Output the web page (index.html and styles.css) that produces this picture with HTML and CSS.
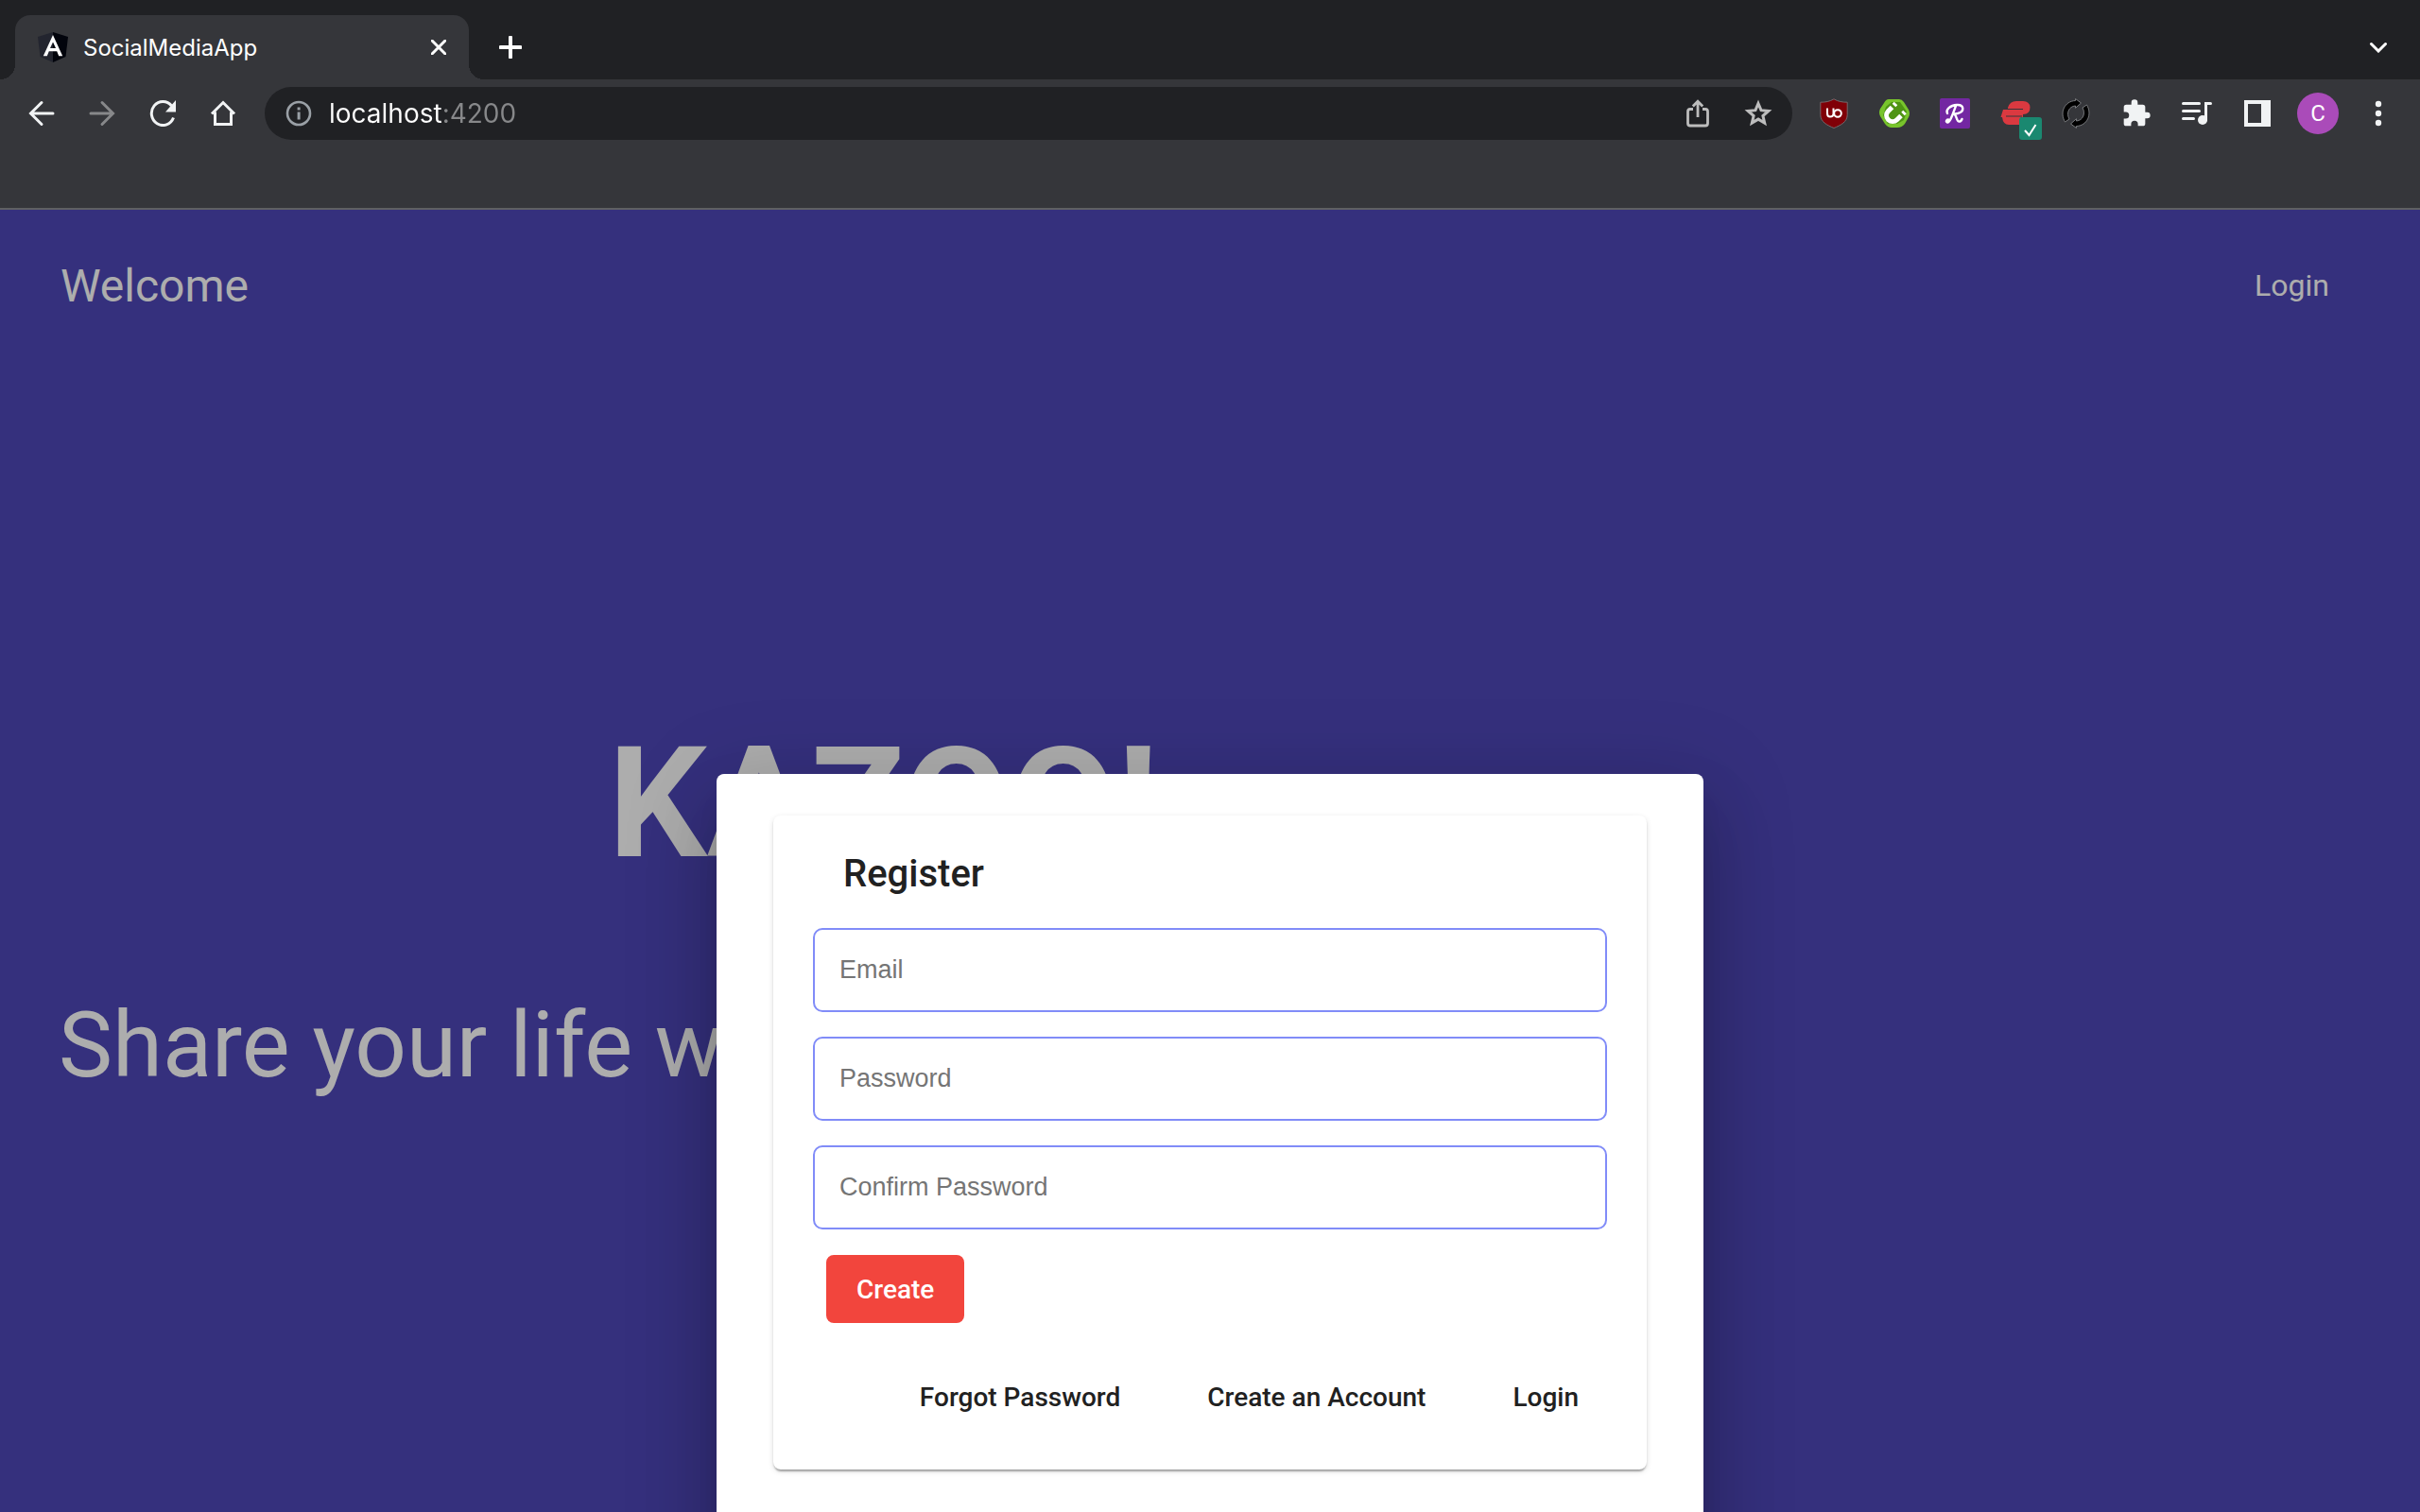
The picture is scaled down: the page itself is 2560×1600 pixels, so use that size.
FILE: index.html
```html
<!DOCTYPE html>
<html lang="en">
<head>
<meta charset="utf-8">
<title>SocialMediaApp</title>
<link rel="stylesheet" href="styles.css">
</head>
<body>
<header class="browser">
  <div class="tabstrip">
    <div class="tab">
      <svg class="favicon" viewBox="0 0 32 32" width="32" height="32"><path fill="#23252f" d="M16 0 0 5l2.500 21L16 32z"/><path fill="#02040c" d="M16 0l16 5-2.500 21L16 32z"/><path fill="#fff" fill-rule="evenodd" d="M16 3 5.800 25.200h4l2-5h8.400l2 5h4zm0 7.600 3 6.400h-6z"/></svg>
      <span class="tab-title">SocialMediaApp</span>
      <button class="tab-close" aria-label="Close tab"><svg viewBox="0 0 16 16" width="16" height="16"><path d="M1 1l14 14M15 1 1 15" stroke="#fff" stroke-width="3" stroke-linecap="round"/></svg></button>
    </div>
    <button class="icon-btn new-tab" aria-label="New tab"><svg viewBox="0 0 24 24" width="24" height="24"><path d="M12 1.500v21M1.500 12h21" stroke="#fff" stroke-width="4" stroke-linecap="round"/></svg></button>
    <button class="icon-btn tab-search" aria-label="Search tabs"><svg viewBox="0 0 20 12" width="20" height="12"><path d="M2.500 2.500 10 10l7.500-7.500" fill="none" stroke="#fff" stroke-width="3" stroke-linecap="round"/></svg></button>
  </div>
  <div class="toolbar">
    <button class="icon-btn" aria-label="Back"><svg viewBox="0 0 28 28" width="28" height="28"><path d="M26 14H3M14 2.500 2.500 14 14 25.500" fill="none" stroke="#f1f3f4" stroke-width="3" stroke-linecap="round"/></svg></button>
    <button class="icon-btn" aria-label="Forward"><svg viewBox="0 0 28 28" width="28" height="28"><path d="M2 14h23M14 2.500 25.500 14 14 25.500" fill="none" stroke="#87888a" stroke-width="3" stroke-linecap="round"/></svg></button>
    <button class="icon-btn" aria-label="Reload"><svg viewBox="0 0 28 28" width="28" height="28"><path d="M25.500 18.500A12 12.500 0 1 1 23.500 6" fill="none" stroke="#f1f3f4" stroke-width="3"/><path fill="#f1f3f4" d="M28 0v12.500H17z"/></svg></button>
    <button class="icon-btn" aria-label="Home"><svg viewBox="0 0 28 28" width="28" height="28"><path d="M2 14.500 14 2.500l12 12M5.500 12.500v13h17v-13" fill="none" stroke="#f1f3f4" stroke-width="3"/></svg></button>
    <div class="omnibox">
      <svg viewBox="0 0 28 28" width="28" height="28"><circle cx="14" cy="14" r="12" fill="none" stroke="#9aa0a6" stroke-width="2.600"/><path fill="#9aa0a6" d="M12.600 12.600h3v8h-3zM12.600 7.400h3v3h-3z"/></svg>
      <input class="address" type="text" value="localhost:4200" aria-label="Address">
      <button class="icon-btn" aria-label="Share this page"><svg viewBox="0 0 28 32" width="28" height="32"><path d="M9 11.500H6a2.500 2.500 0 0 0-2.500 2.500v12.500A2.500 2.500 0 0 0 6 29h16a2.500 2.500 0 0 0 2.500-2.500V14a2.500 2.500 0 0 0-2.500-2.500h-3M14 20V4M8.800 8.500 14 3.300l5.200 5.200" fill="none" stroke="#bdbdbd" stroke-width="2.800"/></svg></button>
      <button class="icon-btn" aria-label="Bookmark this page"><svg viewBox="0 0 32 32" width="32" height="32"><path d="M16 5.500l3 7.200 7.800.7-5.900 5.100 1.800 7.600-6.700-4-6.700 4 1.800-7.600-5.900-5.100 7.800-.7z" fill="none" stroke="#bdbdbd" stroke-width="3"/></svg></button>
    </div>
    <nav class="extensions" aria-label="Extensions">
      <button class="icon-btn" aria-label="uBlock Origin"><svg viewBox="0 0 32 32" width="32" height="32"><path d="M16 .8C11.500 3.500 7 4.200 1.800 4.200v13.300c0 7.500 7 11 14.200 14 7.200-3 14.200-6.500 14.200-14V4.200C25 4.200 20.500 3.500 16 .8z" fill="#800007" stroke="#74696c" stroke-width="1"/><path d="M9 10.500V16q0 3.500 3 3.500 3.500 0 3.500-3.500v-5.500" fill="none" stroke="#fff" stroke-width="2"/><circle cx="20" cy="16" r="3.800" fill="none" stroke="#fff" stroke-width="2"/></svg></button>
      <button class="icon-btn" aria-label="Magnet"><svg viewBox="0 0 32 32" width="32" height="32"><path d="M10 1h11q3 0 5 3l5 8q2 4 0 8l-4 7q-3 4-8 4h-6q-4 0-7-4l-5-8q-2-4 0-8l4-6q2-4 5-4z" fill="#78c42c"/><path d="M13 4h9l7 10-3 9-7 4H9l-5-9 3-9z" fill="#4f9414"/><path d="M13.500 9.500 9.500 13.500a6.500 6.500 0 0 0 9.200 9.200l4.300-4.200" fill="none" stroke="#fff" stroke-width="5"/><path d="M15.500 7.500l2-2M25 16.500l2-2" stroke="#fff" stroke-width="5"/></svg></button>
      <button class="icon-btn" aria-label="Rakuten"><svg viewBox="0 0 32 32" width="32" height="32"><rect width="32" height="32" rx="2" fill="#7327a2"/><path d="M17 8C14 16 11 26 8 25.500c-2-.5-1-3 1-3M8 16C6 12 11 7.500 18 7c8-.5 8.500 7 1 9l-4 .6c3 1 2.500 8 5.500 8 1.500 0 2.500-1.200 3-2.600" fill="none" stroke="#fff" stroke-width="2.400" stroke-linecap="round" stroke-linejoin="round"/></svg></button>
      <button class="icon-btn vpn" aria-label="ExpressVPN connected"><svg viewBox="0 0 32 32" width="32" height="32"><path fill="#da3940" d="M8 10q2-7 9-7h7q7 0 7.500 6.500Q31.500 17 24 17v3H0.500L3 12h5zM2 20h20l-1 2h10l-4 6H9q-6 0-7-8z"/><path stroke="#35363a" d="M8 11.500h16M6 19h17" stroke-width="1.200"/></svg><svg class="badge" viewBox="0 0 24 24" width="24" height="24"><rect width="24" height="24" rx="3" fill="#1a8870"/><path d="M6 14l4.500 5L17.500 8" fill="none" stroke="#fff" stroke-width="2"/></svg></button>
      <button class="icon-btn" aria-label="Sync"><svg viewBox="0 0 32 32" width="32" height="32"><g stroke="#77797c" stroke-width="1" stroke-linejoin="round" fill="#000"><path d="M4.500 25l4.500-3C5.500 16 8.500 8.500 15.500 8v2.300l6-5.300-6-4.500v2C4 3-1.500 15 4.500 25z"/><path d="M27.500 7 23 10c3.500 6 .5 13.500-6.500 14v-2.300l-6 5.300 6 4.500v-2C28 29 33.500 17 27.500 7z"/></g></svg></button>
      <button class="icon-btn" aria-label="Extensions"><svg viewBox="0 0 24 24" width="32" height="32"><path fill="#f1f3f4" d="M20.500 11H19V7a2 2 0 0 0-2-2h-4V3.500a2.500 2.500 0 0 0-5 0V5H4a2 2 0 0 0-1.990 2v3.800H3.500a2.700 2.700 0 0 1 0 5.400H2V20a2 2 0 0 0 2 2h3.800v-1.500a2.700 2.700 0 0 1 5.400 0V22H17a2 2 0 0 0 2-2v-4h1.500a2.500 2.500 0 0 0 0-5z"/></svg></button>
      <button class="icon-btn" aria-label="Media controls"><svg viewBox="0 0 32 28" width="32" height="28"><path d="M1.500 3.500h17M1.500 11.500h17M1.500 19.500h11" stroke="#f1f3f4" stroke-width="3" stroke-linecap="round"/><circle cx="22" cy="21" r="5" fill="#f1f3f4"/><path d="M25.500 21V3.500h5" fill="none" stroke="#f1f3f4" stroke-width="3" stroke-linecap="round"/></svg></button>
      <button class="icon-btn" aria-label="Side panel"><svg viewBox="0 0 28 28" width="28" height="28"><path fill="#f1f3f4" fill-rule="evenodd" d="M0 0h28v28H0zM4 4v20h14V4z"/></svg></button>
      <button class="icon-btn" aria-label="Profile"><span class="avatar">C</span></button>
      <button class="icon-btn" aria-label="Menu"><svg viewBox="0 0 8 28" width="8" height="28" fill="#f1f3f4"><circle cx="4" cy="4" r="3.200"/><circle cx="4" cy="14" r="3.200"/><circle cx="4" cy="24" r="3.200"/></svg></button>
    </nav>
  </div>
</header>
<div class="page">
  <header class="app-bar">
    <a class="brand" href="#">Welcome</a>
    <a class="login" href="#">Login</a>
  </header>
  <main class="hero">
    <h1>KAZOO!</h1>
    <p>Share your life w</p>
  </main>
  <div class="backdrop">
    <section class="dialog" role="dialog" aria-labelledby="register-title">
      <form class="card">
        <h2 id="register-title">Register</h2>
        <input class="field" type="email" placeholder="Email" aria-label="Email">
        <input class="field" type="password" placeholder="Password" aria-label="Password">
        <input class="field" type="password" placeholder="Confirm Password" aria-label="Confirm Password">
        <button class="create" type="button">Create</button>
        <div class="links">
          <a href="#">Forgot Password</a>
          <a href="#">Create an Account</a>
          <a href="#">Login</a>
        </div>
      </form>
    </section>
  </div>
</div>
</body>
</html>
```
FILE: styles.css
```css
* { box-sizing: border-box; }

body {
  margin: 0;
  height: 100vh;
  display: flex;
  flex-direction: column;
  overflow: hidden;
  font-family: Roboto, sans-serif;
}

button {
  border: 0;
  padding: 0;
  background: none;
  font: inherit;
  cursor: pointer;
}

a { color: inherit; text-decoration: none; }
svg { display: block; flex: none; }

/* Browser window */
.browser { background: #35363a; border-bottom: 2px solid #5f6062; }

.tabstrip {
  display: flex;
  align-items: flex-end;
  height: 84px;
  padding: 0 12px 0 16px;
  background: #202124;
}

.tab {
  position: relative;
  display: flex;
  align-items: center;
  width: 480px;
  height: 68px;
  padding: 0 16px 0 24px;
  border-radius: 16px 16px 0 0;
  background: #35363a;
}

.tab::before,
.tab::after {
  content: "";
  position: absolute;
  bottom: 0;
  width: 16px;
  height: 16px;
}
.tab::before { right: 100%; background: radial-gradient(circle at 0 0, transparent 16px, #35363a 16px); }
.tab::after { left: 100%; background: radial-gradient(circle at 100% 0, transparent 16px, #35363a 16px); }

.tab-title {
  flex: 1;
  margin-left: 16px;
  font: 24px Inter, sans-serif;
  color: #fff;
}

.tab-close { display: flex; align-items: center; justify-content: center; width: 32px; height: 32px; }

.icon-btn {
  flex: none;
  display: flex;
  align-items: center;
  justify-content: center;
  width: 64px;
  height: 56px;
}

.new-tab { margin-left: 12px; height: 68px; }
.tab-search { margin-left: auto; height: 68px; }

.toolbar { display: flex; padding: 8px 12px 72px; }

.omnibox {
  flex: 1;
  display: flex;
  align-items: center;
  min-width: 0;
  height: 56px;
  margin: 0 12px;
  padding: 0 4px 0 22px;
  border-radius: 28px;
  background: #202124;
}

.address {
  flex: 1;
  min-width: 0;
  margin-left: 18px;
  padding: 0;
  border: 0;
  outline: 0;
  font: 28px Inter, sans-serif;
  color: #fff;
  background: linear-gradient(90deg, #fff 120px, #87888a 120px);
  background-clip: text;
  -webkit-text-fill-color: transparent;
}

.extensions { display: flex; }
.vpn { position: relative; }
.badge { position: absolute; right: 4px; bottom: 0; }

.avatar {
  width: 44px;
  border-radius: 50%;
  background: #aa4bb9;
  font-size: 24px;
  line-height: 44px;
  text-align: center;
  color: #fff;
}

/* App page */
.page {
  position: relative;
  flex: 1;
  min-height: 0;
  overflow: hidden;
  background: #4e47b8;
  color: #fff;
}

.app-bar {
  display: flex;
  align-items: center;
  justify-content: space-between;
  height: 160px;
  padding: 0 96px 0 64px;
}

.brand { font-size: 48px; }
.login { font-size: 32px; }

.hero { width: 72%; padding: 368px 36px 0 62px; }
.hero h1 { margin: 0; font-size: 164px; line-height: 200px; font-weight: 700; text-align: center; }
.hero p { margin: 98px 0 0; font-size: 96px; line-height: 116px; }

.backdrop {
  position: absolute;
  inset: 0;
  padding-top: 597px;
  background: rgba(0, 0, 0, 0.32);
}

.dialog {
  width: 1044px;
  min-height: 1044px;
  margin: 0 auto;
  padding: 44px 60px;
  border-radius: 8px;
  background: #fff;
  color: #212121;
  box-shadow: 0 22px 30px -14px rgba(0, 0, 0, 0.2), 0 48px 76px 6px rgba(0, 0, 0, 0.14), 0 18px 92px 16px rgba(0, 0, 0, 0.12);
}

.card {
  display: flex;
  flex-direction: column;
  gap: 26px;
  padding: 32px 42px;
  border-radius: 8px;
  box-shadow: 0 4px 2px -2px rgba(0, 0, 0, 0.2), 0 2px 2px rgba(0, 0, 0, 0.14), 0 2px 6px rgba(0, 0, 0, 0.12);
}

.card h2 { margin: 0; padding: 0 32px 2px; font-size: 40px; line-height: 59px; font-weight: 500; }

.field {
  width: 100%;
  height: 89px;
  padding: 0 26px;
  border: 2px solid #818cf8;
  border-radius: 10px;
  font: 27px "Liberation Sans", Arial, sans-serif;
  color: #212121;
}
.field::placeholder { color: #757575; }

.create {
  align-self: flex-start;
  height: 72px;
  margin: 1px 0 0 14px;
  padding: 0 32px;
  border-radius: 8px;
  background: #f2453d;
  font-size: 28px;
  font-weight: 500;
  color: #fff;
}

.links {
  display: flex;
  justify-content: flex-end;
  gap: 92px;
  padding: 16px 30px 7px;
  font-size: 28px;
  line-height: 74px;
  font-weight: 500;
}
```
